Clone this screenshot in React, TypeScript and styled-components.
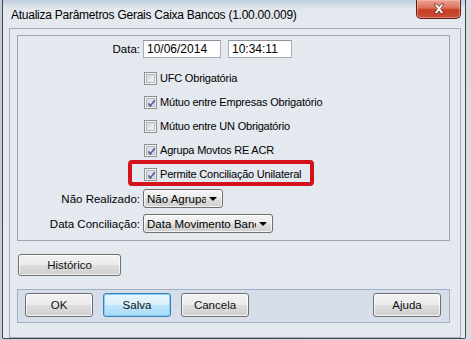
import React from "react";
import styled, { createGlobalStyle, css } from "styled-components";

const GlobalStyle = createGlobalStyle`
  html, body {
    margin: 0;
    padding: 0;
    width: 471px;
    height: 340px;
    overflow: hidden;
    background: #cfd3d8;
  }
  body {
    font-family: "Liberation Sans", Arial, sans-serif;
  }
`;

const Desktop = styled.div`
  width: 471px;
  height: 340px;
  box-sizing: border-box;
  padding-left: 2px;
  display: flex;
  align-items: flex-start;
  background: linear-gradient(90deg, #c9cdd2 0%, #d8dbdf 100%);
`;

const Window = styled.div`
  width: 464px;
  height: 339px;
  box-sizing: border-box;
  border: 1px solid #3f464e;
  border-top: none;
  border-radius: 0 0 2px 2px;
  background: linear-gradient(180deg, #d9e0e8 0px, #e4e9ef 12px, #e6ebf1 100%);
  display: flex;
  flex-direction: column;
`;

const TitleBar = styled.div`
  height: 28px;
  display: flex;
  align-items: flex-start;
  justify-content: space-between;
  padding-left: 8px;
  padding-right: 4px;
  background: linear-gradient(
    180deg,
    rgba(186, 202, 220, 0.8) 0px,
    rgba(226, 232, 239, 0.2) 8px,
    rgba(228, 233, 239, 0) 28px
  );
`;

const Title = styled.span`
  font-family: "Liberation Sans", Arial, sans-serif;
  font-size: 12px;
  letter-spacing: -0.25px;
  color: #000;
  line-height: 28px;
  padding-top: 1px;
`;

const CloseButton = styled.div`
  width: 45px;
  height: 19px;
  box-sizing: border-box;
  border: 1px solid #5b2219;
  border-top: none;
  border-radius: 0 0 5px 5px;
  background: linear-gradient(180deg, #eaa595 0%, #dc6f59 45%, #c63d24 55%, #cc4d36 100%);
  box-shadow: inset 0 0 0 1px rgba(255, 200, 190, 0.45);
  display: flex;
  align-items: center;
  justify-content: center;
`;

const Client = styled.div`
  margin: 0 4px 0 6px;
  width: 452px;
  height: 310px;
  box-sizing: border-box;
  border: 1px solid #a5aeb9;
  background: #e4e8ef;
  padding: 6px 0 0 7px;
  display: flex;
  flex-direction: column;
  align-items: flex-start;
`;

const GroupBox = styled.div`
  width: 433px;
  height: 206px;
  box-sizing: border-box;
  border: 1px solid #9ea5ae;
  padding: 4px 0 4px 0;
  display: grid;
  grid-template-columns: 122px 1fr;
  grid-template-rows: 26px 24px 24px 24px 24px 24px 25px 25px;
  column-gap: 3px;
  align-items: center;
`;

const Label = styled.div<{ $top?: boolean }>`
  justify-self: end;
  font-size: 11.5px;
  color: #000;
  white-space: nowrap;
  ${(p) =>
    p.$top &&
    css`
      align-self: start;
      line-height: 18px;
    `}
`;

const Controls = styled.div<{ $top?: boolean }>`
  display: flex;
  align-items: center;
  gap: 7px;
  ${(p) =>
    p.$top &&
    css`
      align-self: start;
    `}
`;

const TextBox = styled.div<{ $w: number }>`
  width: ${(p) => p.$w}px;
  height: 18px;
  box-sizing: border-box;
  border: 1px solid #a9adb4;
  border-top-color: #8e939b;
  background: #fff;
  font-size: 12px;
  line-height: 16px;
  padding-left: 3px;
  color: #000;
`;

const CheckCell = styled.label<{ $highlight?: boolean }>`
  grid-column: 2;
  position: relative;
  display: flex;
  align-items: center;
  gap: 3px;
  height: 100%;
  padding-left: 1px;
  font-size: 11px;
  letter-spacing: -0.2px;
  color: #000;
  white-space: nowrap;
  ${(p) =>
    p.$highlight &&
    css`
      &::after {
        content: "";
        position: absolute;
        left: -15px;
        top: -2px;
        width: 186px;
        height: 26px;
        box-sizing: border-box;
        border: 4px solid #d4121c;
        border-radius: 4px;
        pointer-events: none;
      }
    `}
`;

const Box = styled.span`
  width: 13px;
  height: 13px;
  box-sizing: border-box;
  border: 1px solid #8e8f8f;
  background: #f4f4f4;
  padding: 1px;
  display: flex;
  flex-shrink: 0;
`;

const BoxInner = styled.span`
  flex: 1;
  background: linear-gradient(135deg, #cfd3d9 0%, #e8eaed 60%, #f7f7f7 100%);
  border: 1px solid #b3b8bf;
  position: relative;
  display: flex;
  align-items: center;
  justify-content: center;
`;

const Combo = styled.div<{ $w: number }>`
  width: ${(p) => p.$w}px;
  height: 19px;
  box-sizing: border-box;
  border: 1px solid #707070;
  border-radius: 3px;
  background: linear-gradient(180deg, #f4f4f4 0%, #ebebeb 48%, #dddddd 52%, #cfcfcf 100%);
  box-shadow: inset 0 0 0 1px rgba(255, 255, 255, 0.7);
  display: flex;
  align-items: center;
  padding: 0 5px 0 3px;
  gap: 3px;
  font-size: 11.5px;
  color: #000;
`;

const ComboText = styled.span`
  flex: 1;
  overflow: hidden;
  white-space: nowrap;
`;

const Arrow = styled.span`
  width: 0;
  height: 0;
  border-left: 4px solid transparent;
  border-right: 4px solid transparent;
  border-top: 4px solid #000;
  flex-shrink: 0;
`;

const Button = styled.button<{ $w: number; $focus?: boolean }>`
  width: ${(p) => p.$w}px;
  height: 24px;
  box-sizing: border-box;
  border: 1px solid #707070;
  border-radius: 3px;
  background: linear-gradient(180deg, #f2f2f2 0%, #ebebeb 48%, #dddddd 52%, #cfcfcf 100%);
  box-shadow: inset 0 0 0 1px rgba(255, 255, 255, 0.75);
  font-family: "Liberation Sans", Arial, sans-serif;
  font-size: 11.5px;
  font-weight: 400;
  color: #111;
  padding: 0;
  margin: 0;
  line-height: 22px;
  ${(p) =>
    p.$focus &&
    css`
      border-color: #3c7fb1;
      background: linear-gradient(180deg, #eaf6fd 0%, #d9f0fc 48%, #bee6fd 52%, #a7d9f5 100%);
      box-shadow: inset 0 0 0 1px #7fd0f7;
    `}
`;

const HistoryButton = styled(Button)`
  margin-top: 13px;
  margin-left: 1px;
  height: 22px;
  line-height: 20px;
`;

const ButtonBar = styled.div`
  margin-top: 13px;
  width: 433px;
  height: 34px;
  box-sizing: border-box;
  border: 1px solid #a3afc1;
  background: #d6deeb;
  display: flex;
  align-items: flex-start;
  padding: 3px 8px 0 7px;
  gap: 10px;
`;

const Spacer = styled.div`
  flex: 1;
`;

const CheckMark = () => (
  <svg width="9" height="9" viewBox="0 0 9 9" style={{ position: "absolute", left: 0, top: 0 }}>
    <path d="M1.3 4.4 L3.4 6.8 L7.8 1.2" fill="none" stroke="#4c6496" strokeWidth="1.7" strokeLinejoin="miter" />
  </svg>
);

const CloseGlyph = () => (
  <svg width="14" height="12" viewBox="0 0 14 12">
    <path
      d="M2 1 L5 1 L7 3.6 L9 1 L12 1 L8.7 5.8 L12 10.5 L9 10.5 L7 7.9 L5 10.5 L2 10.5 L5.3 5.8 Z"
      fill="#ffffff"
      stroke="#6a2a20"
      strokeWidth="0.8"
      strokeLinejoin="round"
    />
  </svg>
);

type Check = { label: string; checked: boolean; highlight?: boolean };

const checks: Check[] = [
  { label: "UFC Obrigatória", checked: false },
  { label: "Mútuo entre Empresas Obrigatório", checked: true },
  { label: "Mútuo entre UN Obrigatório", checked: false },
  { label: "Agrupa Movtos RE ACR", checked: true },
  { label: "Permite Conciliação Unilateral", checked: true, highlight: true },
];

export default function App() {
  return (
    <>
      <GlobalStyle />
      <Desktop>
        <Window>
          <TitleBar>
            <Title>Atualiza Parâmetros Gerais Caixa Bancos (1.00.00.009)</Title>
            <CloseButton>
              <CloseGlyph />
            </CloseButton>
          </TitleBar>
          <Client>
            <GroupBox>
              <Label $top>Data:</Label>
              <Controls $top>
                <TextBox $w={78}>10/06/2014</TextBox>
                <TextBox $w={64}>10:34:11</TextBox>
              </Controls>
              {checks.map((c) => (
                <CheckCell key={c.label} $highlight={c.highlight}>
                  <Box>
                    <BoxInner>{c.checked && <CheckMark />}</BoxInner>
                  </Box>
                  {c.label}
                </CheckCell>
              ))}
              <Label>Não Realizado:</Label>
              <Controls>
                <Combo $w={80}>
                  <ComboText>Não Agrupa</ComboText>
                  <Arrow />
                </Combo>
              </Controls>
              <Label>Data Conciliação:</Label>
              <Controls>
                <Combo $w={130}>
                  <ComboText>Data Movimento Bancário</ComboText>
                  <Arrow />
                </Combo>
              </Controls>
            </GroupBox>
            <HistoryButton $w={103}>Histórico</HistoryButton>
            <ButtonBar>
              <Button $w={68}>OK</Button>
              <Button $w={68} $focus>
                Salva
              </Button>
              <Button $w={68}>Cancela</Button>
              <Spacer />
              <Button $w={68}>Ajuda</Button>
            </ButtonBar>
          </Client>
        </Window>
      </Desktop>
    </>
  );
}
